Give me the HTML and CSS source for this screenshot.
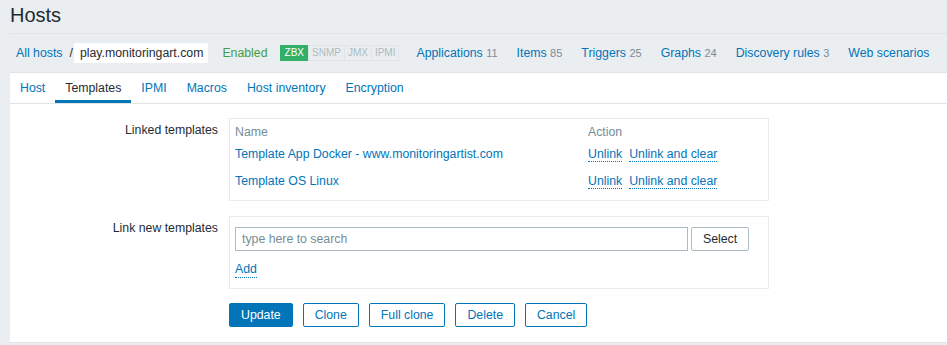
FILE: index.html
```html
<!DOCTYPE html>
<html lang="en">
<head>
  <meta charset="UTF-8">
  <meta name="viewport" content="width=device-width, initial-scale=1.0">
  <title>Hosts</title>
  <link rel="stylesheet" href="styles.css">
</head>

<body>
  <header class="header-title">
    <h1>Hosts</h1>
  </header>

  <div class="host-nav">
    <ul class="breadcrumbs">
      <li><a href="#">All hosts</a></li>
      <li class="sep">/</li>
      <li class="host-name">play.monitoringart.com</li>
    </ul>
    <span class="status-on">Enabled</span>
    <div class="status-container">
      <span class="status-green">ZBX</span>
      <span class="status-grey">SNMP</span>
      <span class="status-grey">JMX</span>
      <span class="status-grey">IPMI</span>
    </div>
    <ul class="object-links">
      <li><a href="#">Applications</a> <sup>11</sup></li>
      <li><a href="#">Items</a> <sup>85</sup></li>
      <li><a href="#">Triggers</a> <sup>25</sup></li>
      <li><a href="#">Graphs</a> <sup>24</sup></li>
      <li><a href="#">Discovery rules</a> <sup>3</sup></li>
      <li><a href="#">Web scenarios</a></li>
    </ul>
  </div>

  <main class="container">
    <ul class="tabs">
      <li><a href="#">Host</a></li>
      <li class="active"><a href="#">Templates</a></li>
      <li><a href="#">IPMI</a></li>
      <li><a href="#">Macros</a></li>
      <li><a href="#">Host inventory</a></li>
      <li><a href="#">Encryption</a></li>
    </ul>

    <form class="table-forms">
      <div class="form-row">
        <label class="form-label">Linked templates</label>
        <div class="form-box linked">
          <div class="linked-row head">
            <span class="col-name">Name</span>
            <span class="col-action">Action</span>
          </div>
          <div class="linked-row">
            <a class="col-name" href="#">Template App Docker - www.monitoringartist.com</a>
            <span class="col-action">
              <a class="link-action" href="#">Unlink</a>
              <a class="link-action" href="#">Unlink and clear</a>
            </span>
          </div>
          <div class="linked-row">
            <a class="col-name" href="#">Template OS Linux</a>
            <span class="col-action">
              <a class="link-action" href="#">Unlink</a>
              <a class="link-action" href="#">Unlink and clear</a>
            </span>
          </div>
        </div>
      </div>

      <div class="form-row">
        <label class="form-label">Link new templates</label>
        <div class="form-box new">
          <div class="multiselect">
            <input type="text" placeholder="type here to search">
            <button type="button" class="btn-grey">Select</button>
          </div>
          <a class="link-action add" href="#">Add</a>
        </div>
      </div>

      <div class="form-buttons">
        <button type="button" class="btn-main">Update</button>
        <button type="button" class="btn-alt">Clone</button>
        <button type="button" class="btn-alt">Full clone</button>
        <button type="button" class="btn-alt">Delete</button>
        <button type="button" class="btn-alt">Cancel</button>
      </div>
    </form>
  </main>
</body>
</html>
```

FILE: styles.css
```css
* {
  margin: 0;
  padding: 0;
  box-sizing: border-box;
}

body {
  width: 100%;
  height: 100vh;
  overflow: hidden;
  background: #ebeef0;
  color: #1f2c33;
  font-family: "Liberation Sans", Arial, sans-serif;
  font-size: 12.3px;
  line-height: 14px;
}

a {
  color: #0275b8;
  text-decoration: none;
}

ul {
  list-style: none;
}

.header-title {
  margin-left: 9px;
  padding: 3px 0 6px 1px;
  border-bottom: 1px solid #dfe4e7;
}

.header-title h1 {
  font-size: 20px;
  font-weight: normal;
  line-height: 24px;
}

/* host navigation row */
.host-nav {
  display: flex;
  align-items: center;
  height: 38px;
  padding-left: 16px;
  white-space: nowrap;
}

.breadcrumbs {
  display: flex;
  align-items: center;
}

.breadcrumbs .sep {
  margin: 0 1px 0 7px;
  color: #1f2c33;
}

.breadcrumbs .host-name {
  height: 20px;
  line-height: 20px;
  padding: 0 5px 0 6px;
  background: #fff;
}

.status-on {
  margin-left: 14px;
  color: #429e47;
}

.status-container {
  display: flex;
  margin-left: 12px;
}

.status-container span {
  height: 16px;
  line-height: 14px;
  padding: 0 3px;
  font-size: 10px;
  border: 1px solid #dfe4e7;
}

.status-container .status-green {
  padding: 0 4px;
  color: #fff;
  background: #34af67;
  border-color: #34af67;
}

.status-container .status-grey {
  color: #acbbc2;
  background: #ebeef0;
  margin-left: -1px;
}

.object-links {
  display: flex;
  gap: 19px;
  margin-left: 17px;
}

.object-links sup {
  vertical-align: baseline;
  font-size: 11px;
  color: #768d99;
}

/* main white area */
.container {
  margin-left: 10px;
  background: #fff;
  border-top: 1px solid #dfe4e7;
  border-bottom: 1px solid #dfe4e7;
}

.tabs {
  display: flex;
  border-bottom: 1px solid #dfe4e7;
}

.tabs li a {
  display: block;
  padding: 3px 10px 0;
  height: 30px;
  line-height: 24px;
  border-bottom: 3px solid transparent;
}

.tabs li.active a {
  color: #1f2c33;
  border-bottom-color: #0275b8;
}

.table-forms {
  padding: 14px 0 15px;
}

.form-row {
  display: flex;
  align-items: flex-start;
  margin-bottom: 15px;
}

.form-row + .form-row {
  margin-bottom: 14px;
}

.form-label {
  width: 208px;
  margin-right: 11px;
  padding-top: 5px;
  text-align: right;
}

.form-box {
  width: 540px;
  border: 1px solid #ebebeb;
}

.linked {
  padding: 0 5px 3px;
}

.linked-row {
  display: flex;
  height: 27px;
  padding-top: 4px;
}

.linked-row.head {
  height: 24px;
  padding-top: 6px;
  color: #768d99;
}

.col-name {
  width: 353px;
}

.col-action {
  display: flex;
  gap: 7px;
  align-items: flex-start;
}

.link-action {
  border-bottom: 1px dotted #0275b8;
}

.new {
  padding: 10px 5px 10px;
}

.multiselect {
  display: flex;
  gap: 3px;
}

.multiselect input {
  width: 453px;
  height: 24px;
  padding: 0 6px;
  border: 1px solid #acbbc2;
  outline: none;
  font-family: inherit;
  font-size: 12.3px;
  color: #1f2c33;
}

.multiselect input::placeholder {
  color: #768d99;
}

.add {
  display: inline-block;
  margin-top: 11px;
  line-height: 15px;
}

button {
  height: 24px;
  padding: 0 11px;
  font-family: inherit;
  font-size: 12.3px;
  border-radius: 2px;
  cursor: pointer;
}

.btn-grey {
  width: 58px;
  color: #1f2c33;
  background: #fff;
  border: 1px solid #acbbc2;
}

.form-buttons {
  display: flex;
  gap: 10px;
  margin-left: 219px;
}

.btn-main {
  color: #fff;
  background: #0275b8;
  border: 1px solid #0275b8;
}

.btn-alt {
  color: #0275b8;
  background: #fff;
  border: 1px solid #0275b8;
}
```
